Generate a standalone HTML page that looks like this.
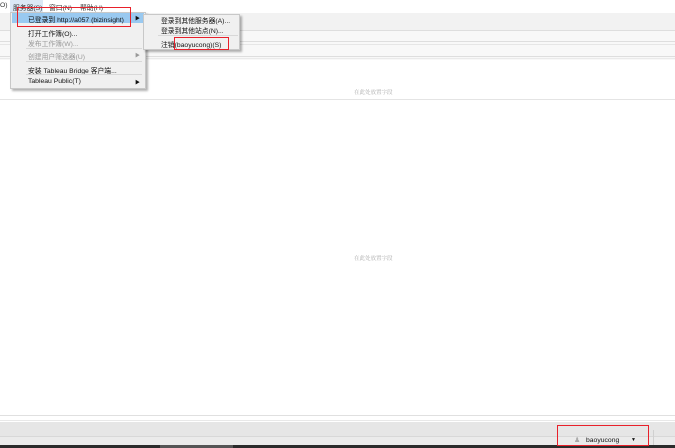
<!DOCTYPE html>
<html><head><meta charset="utf-8"><style>
*{margin:0;padding:0;box-sizing:border-box}
body{width:675px;height:448px;position:relative;overflow:hidden;background:#fff;font-family:"Liberation Sans","Noto Sans CJK SC",sans-serif;font-size:6.8px;color:#111}
.a{position:absolute}
.hl{background:#f2f2f2}
.ln{position:absolute;left:0;width:675px;height:1px;background:#dedede}
.red{position:absolute;border:1.5px solid #e8202a}
.mi{position:absolute;left:18px;white-space:nowrap}
.dis{color:#999}
.arr{position:absolute;font-size:5px}
</style></head><body>
<div class="a" style="left:0;top:0;width:675px;height:12px;background:#fff"></div>
<div class="a" style="left:0;top:2px;color:#333">O)</div>
<div class="a" style="left:10px;top:0;width:33px;height:12px;background:#dbe8f5"></div>
<div class="a" style="left:13px;top:2px;color:#333">服务器(S)</div>
<div class="a" style="left:49px;top:2px;color:#333">窗口(N)</div>
<div class="a" style="left:80px;top:2px;color:#333">帮助(H)</div>
<div class="a hl" style="left:0;top:13px;width:675px;height:17px"></div>
<div class="a" style="left:0;top:30px;width:675px;height:30px;background:#f8f8f8"></div>
<div class="ln" style="top:30px"></div>
<div class="ln" style="top:41px"></div>
<div class="ln" style="top:44px;background:#e6e6e6"></div>
<div class="ln" style="top:56px"></div>
<div class="ln" style="top:58px;background:#eaeaea"></div>
<div class="a" style="left:354px;top:88px;color:#aaa;font-size:5.5px;font-family:'Noto Serif CJK SC',serif">在此处放置字段</div>
<div class="ln" style="top:99px;background:#e4e4e4"></div>
<div class="a" style="left:354px;top:254px;color:#aaa;font-size:5.5px;font-family:'Noto Serif CJK SC',serif">在此处放置字段</div>
<div class="ln" style="top:415px;background:#e0e0e0"></div>
<div class="ln" style="top:420px;background:#e8e8e8"></div>
<div class="a" style="left:0;top:422px;width:675px;height:14px;background:#e6e6e6"></div>
<div class="ln" style="top:436px;background:#d8d8d8"></div>
<div class="a" style="left:0;top:437px;width:675px;height:8px;background:#ebebeb"></div>
<div class="a" style="left:0;top:445px;width:675px;height:3px;background:#2b2b2b"></div>
<div class="a" style="left:160px;top:445px;width:73px;height:3px;background:#555"></div>
<div class="a" style="left:574px;top:436px;font-size:7px;color:#aaa">&#9823;</div>
<div class="a" style="left:586px;top:437px;font-size:6.8px;color:#111">baoyucong</div>
<div class="a" style="left:631px;top:437px;font-size:5px">&#9660;</div>
<div class="a" style="left:653px;top:430px;width:1px;height:15px;background:#d0d0d0"></div>
<!-- dropdown -->
<div class="a" style="left:10px;top:12px;width:136px;height:77px;background:#f0f0f0;border:1px solid #c8c8c8;box-shadow:2px 2px 2px rgba(0,0,0,.3)"></div>
<div class="a" style="left:12px;top:13px;width:132px;height:10px;background:#99c9f0"></div>
<div class="mi" style="left:28px;top:14px">已登录到 http://a057 (bizinsight)</div>
<div class="arr" style="left:135px;top:15px">&#9654;</div>
<div class="mi" style="left:28px;top:28px">打开工作簿(O)...</div>
<div class="mi dis" style="left:28px;top:38px">发布工作簿(W)...</div>
<div class="a" style="left:26px;top:48px;width:116px;height:1px;background:#d8d8d8"></div>
<div class="mi dis" style="left:28px;top:51px">创建用户筛选器(U)</div>
<div class="arr dis" style="left:135px;top:52px">&#9654;</div>
<div class="a" style="left:26px;top:61px;width:116px;height:1px;background:#d8d8d8"></div>
<div class="mi" style="left:28px;top:65px">安装 Tableau Bridge 客户端...</div>
<div class="a" style="left:26px;top:74px;width:116px;height:1px;background:#d8d8d8"></div>
<div class="mi" style="left:28px;top:78px">Tableau Public(T)</div>
<div class="arr" style="left:135px;top:79px">&#9654;</div>
<!-- submenu -->
<div class="a" style="left:143px;top:14px;width:97px;height:36px;background:#f0f0f0;border:1px solid #c8c8c8;box-shadow:2px 2px 2px rgba(0,0,0,.3)"></div>
<div class="mi" style="left:161px;top:15px">登录到其他服务器(A)...</div>
<div class="mi" style="left:161px;top:25px">登录到其他站点(N)...</div>
<div class="a" style="left:158px;top:35px;width:80px;height:1px;background:#d8d8d8"></div>
<div class="mi" style="left:161px;top:39px">注销(baoyucong)(S)</div>
<!-- red boxes -->
<div class="red" style="left:17px;top:7px;width:114px;height:20px"></div>
<div class="red" style="left:174px;top:37px;width:55px;height:13px"></div>
<div class="red" style="left:557px;top:425px;width:92px;height:21px"></div>
</body></html>
